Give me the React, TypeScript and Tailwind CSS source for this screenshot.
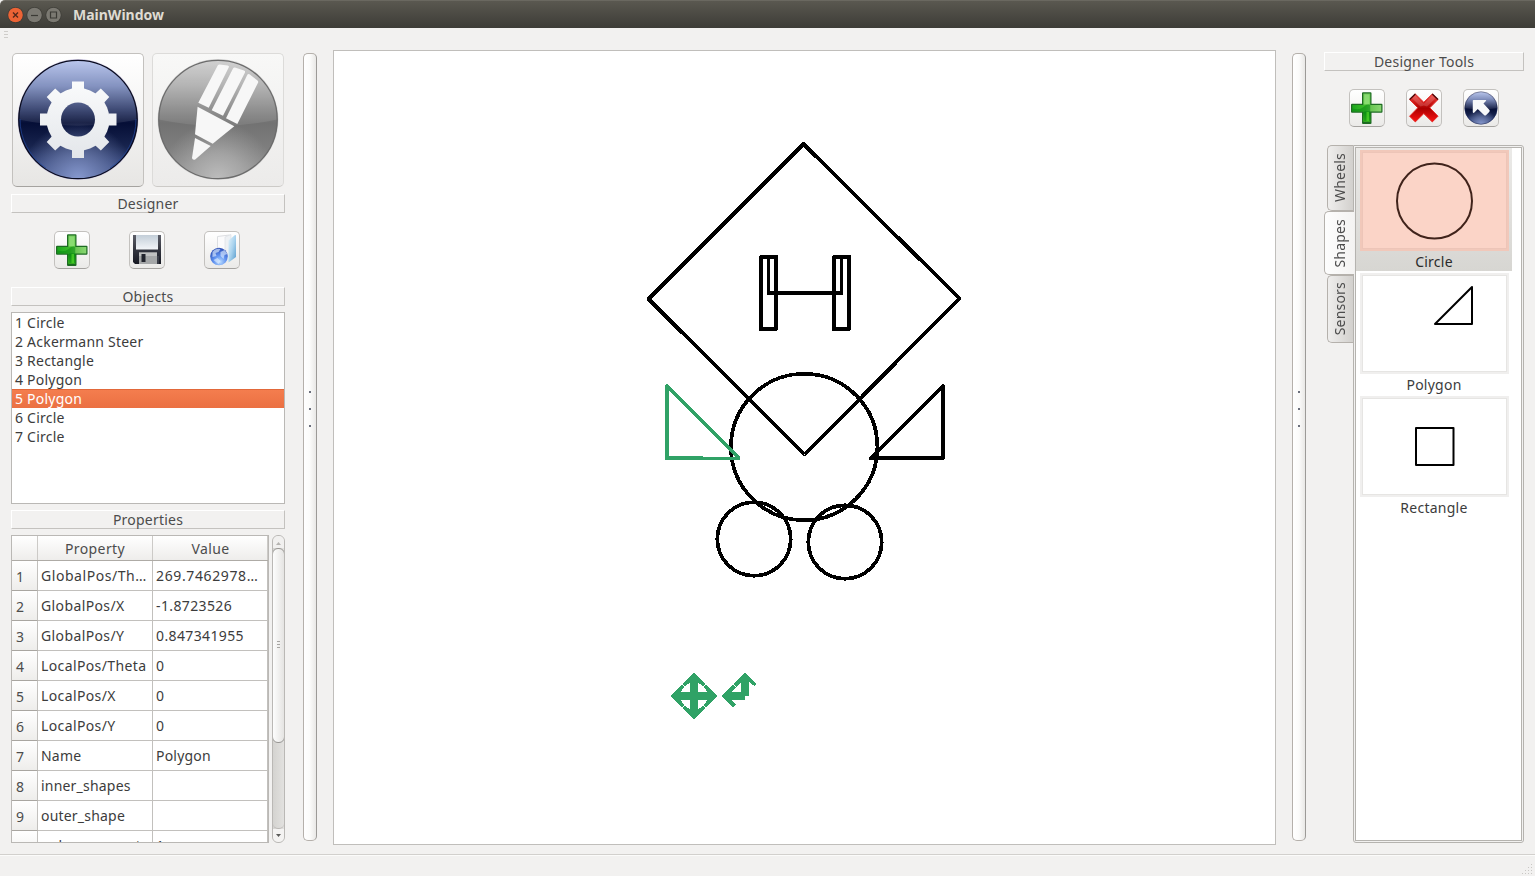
import React from "react";

const objects = ["1 Circle", "2 Ackermann Steer", "3 Rectangle", "4 Polygon", "5 Polygon", "6 Circle", "7 Circle"];

const properties: [string, string][] = [
  ["GlobalPos/Th…", "269.7462978…"],
  ["GlobalPos/X", "-1.8723526"],
  ["GlobalPos/Y", "0.847341955"],
  ["LocalPos/Theta", "0"],
  ["LocalPos/X", "0"],
  ["LocalPos/Y", "0"],
  ["Name", "Polygon"],
  ["inner_shapes", ""],
  ["outer_shape", ""],
  ["polygon_count", "1"],
];

function PanelLabel({ children, className = "" }: { children: React.ReactNode; className?: string }) {
  return (
    <div
      className={`flex h-[19px] shrink-0 items-center justify-center border border-t-white border-r-[#c4c2bf] border-b-[#c4c2bf] border-l-white tracking-[0.22px] text-[#4c4c4c] ${className}`}
    >
      {children}
    </div>
  );
}

function ToolButton({ children }: { children: React.ReactNode }) {
  return (
    <button className="flex h-[38px] w-9 items-center justify-center rounded-[5px] border border-[#c3c1be] border-b-[#a5a3a0] bg-linear-to-b from-white to-[#ebeae8]">
      {children}
    </button>
  );
}

function Splitter() {
  return (
    <div className="mt-[3px] flex h-[788px] w-[14px] shrink-0 flex-col items-center rounded-[5px] border border-[#b5b0ab] border-r-[#9c9a97] bg-linear-to-r from-white via-[#fbfbfa] to-[#e9e8e6] pt-[337px]">
      <i className="size-[2px] bg-[#6b6f7c]" />
      <i className="mt-[15px] size-[2px] bg-[#6b6f7c]" />
      <i className="mt-[15px] size-[2px] bg-[#6b6f7c]" />
    </div>
  );
}

function PlusIcon() {
  return (
    <svg width="34" height="34" viewBox="0 0 34 34" className="shrink-0">
      <defs>
        <linearGradient id="plusV" x1="0" y1="0" x2="0" y2="1">
          <stop offset="0" stopColor="#6fcb58" />
          <stop offset=".35" stopColor="#6fd453" />
          <stop offset=".6" stopColor="#0c8f14" />
          <stop offset="1" stopColor="#3fc61f" />
        </linearGradient>
        <linearGradient id="plusH" x1="0" y1="0" x2="1" y2="0">
          <stop offset="0" stopColor="#1ca81d" />
          <stop offset=".45" stopColor="#3dbb2a" />
          <stop offset=".65" stopColor="#69c653" />
          <stop offset="1" stopColor="#8ad673" />
        </linearGradient>
      </defs>
      <path
        d="M13 1.300h7.500q1 0 1 1v10.400h10q1 0 1 1v7q0 1-1 1h-10v10.200q0 1-1 1H13q-1 0-1-1V21.700H2q-1 0-1-1v-7q0-1 1-1h10V2.300q0-1 1-1z"
        fill="#1d6b22"
      />
      <path d="M13.300 2.500h7v28.200h-7z" fill="url(#plusV)" />
      <path d="M2.300 14h29v6.500h-29z" fill="url(#plusH)" />
      <path d="M14.300 3.500h5v9.500h-5z" fill="#a4e58e" opacity=".5" />
      <path d="M2.500 17.500q7 2 11-1.500t7-2h-.3v16h-6V20.300H2.500z" fill="#068511" opacity=".5" />
      <path d="M16.500 21h2.500v9h-2.500z" fill="#5ee02f" opacity=".6" />
    </svg>
  );
}

function SaveIcon() {
  return (
    <svg width="30" height="32" viewBox="0 0 30 32" className="shrink-0">
      <defs>
        <linearGradient id="diskBody" x1="0" y1="0" x2="0" y2="1">
          <stop offset="0" stopColor="#5d5f69" />
          <stop offset=".5" stopColor="#343640" />
          <stop offset="1" stopColor="#171923" />
        </linearGradient>
        <linearGradient id="diskLabel" x1="0" y1="0" x2="0" y2="1">
          <stop offset="0" stopColor="#c3ced8" />
          <stop offset="1" stopColor="#f3f5f9" />
        </linearGradient>
      </defs>
      <path d="M1 1h28v29H3l-2-2z" fill="url(#diskBody)" />
      <path d="M4 1h22v14.500H4z" fill="url(#diskLabel)" />
      <path d="M7 18.500h18V30H7z" fill="#a5a7a8" />
      <path d="M7 18.500h18V22H7z" fill="#c0c1c1" />
      <path d="M9.500 20h4v8h-4z" fill="#22242d" />
      <path d="M26 22v8" stroke="#555862" />
    </svg>
  );
}

function OpenIcon() {
  return (
    <svg width="32" height="34" viewBox="0 0 32 34" className="shrink-0">
      <defs>
        <linearGradient id="folderFlap" x1="0" y1="0" x2="1" y2="1">
          <stop offset="0" stopColor="#e4f3fb" />
          <stop offset=".5" stopColor="#a9d3ee" />
          <stop offset="1" stopColor="#579bcc" />
        </linearGradient>
        <radialGradient id="globe" cx=".55" cy=".8" r=".75">
          <stop offset="0" stopColor="#b9dcff" />
          <stop offset=".5" stopColor="#5d8fee" />
          <stop offset="1" stopColor="#2f52b8" />
        </radialGradient>
      </defs>
      <path d="M11.500 3.500l12-1.500v22l-12 3z" fill="#fbfbfc" stroke="#dcdee1" />
      <path d="M19 4l6-2.500v24L19 30z" fill="#eef1f4" stroke="#d8dce0" strokeWidth=".6" />
      <path d="M22.500 7.500L29 2q1-.5 1 1v21l-7.500 5.500z" fill="url(#folderFlap)" />
      <circle cx="13" cy="23.500" r="8.800" fill="url(#globe)" />
      <path
        d="M6.500 19q3-4 8-3l-2 3-3 1 1 3-4 1zM14.500 19l4-2 3 4-3 1-1 4-3-3zM7.500 27l4-2 3 3-2 3z"
        fill="#dcebff"
        opacity=".65"
      />
    </svg>
  );
}

function DeleteIcon() {
  return (
    <svg width="34" height="34" viewBox="0 0 34 34" className="shrink-0">
      <defs>
        <linearGradient id="crossFill" x1="0" y1="0" x2="0" y2="1">
          <stop offset="0" stopColor="#ec4d49" />
          <stop offset=".3" stopColor="#cf1a18" />
          <stop offset=".52" stopColor="#ab0000" />
          <stop offset="1" stopColor="#fb1212" />
        </linearGradient>
      </defs>
      <path
        d="M8.300 3l8.500 8.300L25.300 3l5.700 5.500-8.200 8.300 8.200 8.400-5.700 5.700-8.500-8.300-8.500 8.300-5.700-5.700 8.200-8.400-8.200-8.300z"
        fill="url(#crossFill)"
        stroke="#e32a26"
        strokeWidth="1"
        strokeLinejoin="round"
      />
      <path d="M2.600 8.500L8.300 3M31 8.500L25.300 3" stroke="#4c0809" strokeWidth="1.300" />
      <path d="M8.300 4.500l8.500 8.300 8.500-8.300 3 3-8.300 8-3.200-1-3.300 1-8.200-8z" fill="#fff" opacity=".16" />
    </svg>
  );
}

function BallDefs({ id, dark }: { id: string; dark: boolean }) {
  return (
    <defs>
      <linearGradient id={`${id}Ball`} x1="0" y1="0" x2="0" y2="1">
        <stop offset="0" stopColor={dark ? "#b4c2ec" : "#cdcdcd"} />
        <stop offset=".22" stopColor={dark ? "#7888ba" : "#acacac"} />
        <stop offset=".42" stopColor={dark ? "#2b3866" : "#858585"} />
        <stop offset=".53" stopColor={dark ? "#050e36" : "#727272"} />
        <stop offset=".72" stopColor={dark ? "#17234d" : "#7d7d7d"} />
        <stop offset="1" stopColor={dark ? "#405696" : "#939393"} />
      </linearGradient>
      <radialGradient id={`${id}Glow`} cx=".5" cy="1" r=".48">
        <stop offset="0" stopColor={dark ? "#8799cf" : "#bdbdbd"} />
        <stop offset=".45" stopColor={dark ? "#7484b4" : "#b0b0b0"} stopOpacity=".7" />
        <stop offset="1" stopColor={dark ? "#7484b4" : "#a5a5a5"} stopOpacity="0" />
      </radialGradient>
    </defs>
  );
}

function Ball({ id, dark }: { id: string; dark: boolean }) {
  return (
    <g>
      <BallDefs id={id} dark={dark} />
      <circle cx="66" cy="66.500" r="60.400" fill={dark ? "#bfb7d9" : "#c6c6c6"} opacity=".7" />
      <circle cx="66" cy="66.500" r="59.500" fill={`url(#${id}Ball)`} />
      <path d="M6.500 66.500Q66 79 125.500 66.500A59.500 59.500 0 0 0 6.500 66.500z" fill="#fff" opacity=".09" />
      <circle cx="66" cy="66.500" r="59.500" fill={`url(#${id}Glow)`} />
      <circle cx="66" cy="66.500" r="59.200" fill="none" stroke={dark ? "#0b0d20" : "#6c6c6c"} strokeWidth="1.300" />
      {dark && (
        <path
          d="M8 66a58 58 0 0 0 26 49M124 66a58 58 0 0 1-26 49"
          fill="none"
          stroke="#21479e"
          strokeWidth="1"
          opacity=".7"
        />
      )}
    </g>
  );
}

function SettingsIcon() {
  return (
    <svg width="132" height="134" viewBox="0 0 132 134" className="-m-px">
      <defs>
        <linearGradient id="gearFill" x1="0" y1="28" x2="0" y2="105" gradientUnits="userSpaceOnUse">
          <stop offset="0" stopColor="#fafbfc" />
          <stop offset="1" stopColor="#e3e6ea" />
        </linearGradient>
        <mask id="gearHole">
          <rect width="132" height="134" fill="#fff" />
          <circle cx="66" cy="66.500" r="17" fill="#000" />
        </mask>
      </defs>
      <Ball id="settings" dark />
      <g fill="url(#gearFill)" mask="url(#gearHole)">
        <circle cx="66" cy="66.500" r="31.500" />
        <path d="M60 28.500h12v8h-12zM60 97h12v8H60zM28 60.500h8v12h-8zM96.500 60.500h8v12h-8z" />
        <path d="M34.700 44l8.500-8.500 6 5.500-9 9zM97.300 44l-8.500-8.500-6 5.500 9 9zM34.700 89l8.500 8.500 6-5.500-9-9zM97.300 89l-8.500 8.500-6-5.500 9-9z" />
      </g>
    </svg>
  );
}

function DesignerIcon() {
  return (
    <svg width="132" height="134" viewBox="0 0 132 134" className="-m-px">
      <Ball id="designer" dark={false} />
      <g fill="#f7f7f7">
        <path d="M65.700 12.500q.5-1 2-1l8 1q2 .3 1 2L56.700 54.700l-10.400-4.900z" />
        <path d="M81 15.500q.6-1.300 2-1l9 3q1.600.7 1 2L71 62.700l-11.300-5.500z" />
        <path d="M95.500 21.500q.6-1 2-.3l8 6.300q1.100 1 .5 2.300L85.300 71 74 65.300z" />
        <path d="M45.600 53.700l36.700 19.600-21.600 17.400-17.700-9.400z" />
        <path d="M43 85l15.700 8-15.500 13.500q-2.700 1-3.200-1.500z" />
      </g>
    </svg>
  );
}

function CursorIcon() {
  return (
    <svg width="34" height="34" viewBox="4 4.500 124 124" className="shrink-0">
      <Ball id="cursor" dark />
      <path d="M36 40q0-3 3-3h43q5 0 2 4l-9 9 21 23q4 4 0 8L85 92q-4 4-8 0L54 70 42 83q-5 4-6-2z" fill="#f7f8fa" />
    </svg>
  );
}

function ScrollBar() {
  return (
    <div className="flex h-[308px] w-[13px] flex-col overflow-hidden rounded-[6px] border border-[#bab8b5] bg-linear-to-r from-[#d4d3d0] to-[#e2e1df]">
      <div className="flex h-3 shrink-0 items-center justify-center bg-[#f1f0ef] pt-[2px]">
        <svg width="5" height="3" viewBox="0 0 5 3"><path d="M2.500 0L5 3H0z" fill="#b5b3b0" /></svg>
      </div>
      <div className="-mx-px flex h-[195px] shrink-0 flex-col items-center justify-center gap-[2px] rounded-[6px] border border-[#989693] bg-linear-to-r from-[#fdfdfd] to-[#e5e4e2] pb-[2px]">
        <i className="h-px w-[3px] bg-[#a7a5a2]" />
        <i className="h-px w-[3px] bg-[#a7a5a2]" />
        <i className="h-px w-[3px] bg-[#a7a5a2]" />
      </div>
      <div className="h-[86px] shrink-0 rounded-b-[5px] border-b border-[#bab8b5]" />
      <div className="flex grow items-center justify-center bg-[#f4f3f2] pb-px">
        <svg width="5" height="3" viewBox="0 0 5 3"><path d="M0 0h5L2.500 3z" fill="#5b5b59" /></svg>
      </div>
    </div>
  );
}

function PropertyTable() {
  return (
    <div className="h-[308px] w-[258px] overflow-hidden border border-[#bab8b5] bg-white">
      <div className="flex h-[25px] border-b border-[#aeaba6] bg-linear-to-b from-white to-[#eeedeb] text-[#4c4c4c]">
        <div className="w-[26px] border-r border-[#cccac7]" />
        <div className="flex w-[115px] items-center justify-center border-r border-[#cccac7] tracking-[0.4px]">Property</div>
        <div className="flex w-[115px] items-center justify-center border-r border-[#cccac7] pl-px tracking-[0.4px]">Value</div>
      </div>
      {properties.map(([name, value], i) => (
        <div key={name} className="flex h-[30px] leading-[29px] whitespace-nowrap">
          <div className="w-[26px] border-r border-b border-r-[#c2c0bd] border-b-[#a9a6a1] bg-linear-to-b from-white to-[#eeedeb] pt-px pl-1 text-[#4c4c4c]">
            {i < 9 ? i + 1 : ""}
          </div>
          <div className={`w-[115px] border-r border-b border-[#c2c0bd] pl-[3px] ${i === 0 ? "tracking-[0.55px]" : i > 5 ? "tracking-[0.2px]" : "tracking-[0.38px]"}`}>
            {name}
          </div>
          <div className={`w-[115px] border-r border-b border-[#c2c0bd] pl-[3px] ${i === 0 ? "tracking-[0.62px]" : i === 6 ? "tracking-[0.2px]" : "tracking-[0.38px]"}`}>
            {value}
          </div>
        </div>
      ))}
    </div>
  );
}

const arm = "0,-23 11.500,-12 8.800,-9.500 3.800,-14 3.800,3.800 -3.800,3.800 -3.800,-14 -8.800,-9.500 -11.500,-12";

function Canvas() {
  return (
    <div className="h-[795px] w-[943px] shrink-0 border border-[#c0bebb] bg-white">
      <svg width="941" height="793" viewBox="334 51 941 793" shapeRendering="crispEdges" className="block">
        <g fill="none" stroke="#000" strokeWidth="3.700" strokeLinejoin="round">
          <path d="M803.500 144L959.500 298.500 804.500 454.500 648.500 299z" />
          <path d="M761 257h15v72h-15zM834 257h15v72h-15z" strokeWidth="4" />
          <path d="M768.500 256v37M841.500 293v-37" strokeWidth="3" />
          <path d="M767 293h76" strokeWidth="4" />
          <path d="M943 386v72h-72z" strokeWidth="4" />
          <circle cx="804.200" cy="447" r="73.200" />
          <circle cx="754" cy="539" r="36.700" />
          <circle cx="845" cy="542" r="36.700" />
          <path d="M703 458H667V386L739 458" stroke="#30a266" strokeWidth="4" />
          <path d="M702 458.500h37" stroke="#30a266" strokeWidth="3" strokeLinecap="round" />
        </g>
        <g fill="#30a266">
          <g transform="translate(694 696)">
            <polygon points={arm} />
            <polygon points={arm} transform="rotate(90)" />
            <polygon points={arm} transform="rotate(180)" />
            <polygon points={arm} transform="rotate(270)" />
          </g>
          <g transform="translate(745 696)">
            <path d="M0-23L11.700-12.300 9.200-10 4-14V0H0V4H-14L-9.200 8.500-12 11.500-23 0-12-11.500-9.200-8.500-14-4H-4V-14L-8.500-9.200-11.500-12z" />
          </g>
        </g>
      </svg>
    </div>
  );
}

function ShapeTile({ label, selected = false, children }: { label: string; selected?: boolean; children: React.ReactNode }) {
  return (
    <div
      className={`flex h-[123px] w-[156px] flex-col items-center pt-[2px] ${selected ? "bg-linear-to-b from-[#ebeae8] to-[#d7d6d2]" : ""}`}
    >
      <div className={`h-[101px] w-[149px] border-2 p-px ${selected ? "border-[#f1c8ba] bg-[#fbd4c7]" : "border-[#f0efee] bg-white"}`}>
        <svg
          width="143"
          height="95"
          viewBox="0 0 143 95"
          fill="none"
          strokeWidth="2"
          strokeLinejoin="round"
          className={`block outline ${selected ? "stroke-[#40231b] outline-[#edc5b8]" : "stroke-black outline-[#e6e5e3]"}`}
        >
          {children}
        </svg>
      </div>
      <div className={`mt-px leading-[19px] tracking-[0.25px] ${selected ? "text-[#2b2b2b]" : ""}`}>{label}</div>
    </div>
  );
}

function Tab({ children, className }: { children: string; className: string }) {
  return (
    <div className={`flex items-center justify-center rounded-l-[5px] border border-r-0 border-[#b5b1ac] tracking-[0.2px] ${className}`}>
      <span className="rotate-180 [writing-mode:vertical-rl]">{children}</span>
    </div>
  );
}

export default function App() {
  return (
    <div className="flex h-[876px] w-[1535px] flex-col overflow-hidden bg-[#f2f1f0] font-['Noto_Sans','Open_Sans',sans-serif] text-[14px] text-[#3c3c3c]">
      <header className="flex h-7 shrink-0 items-center rounded-tl-[5px] border-t border-[#6a6860] bg-linear-to-b from-[#5a5850] to-[#3d3c37] pl-[7px]">
        <svg width="56" height="18" viewBox="0 0 56 18" fill="none">
          <circle cx="8.500" cy="9" r="8" fill="#33322e" opacity=".6" />
          <circle cx="8.500" cy="9" r="7.300" fill="#ec6335" />
          <path d="M6 6.500l5 5M11 6.500l-5 5" stroke="#53281b" strokeWidth="1.400" />
          <circle cx="27.500" cy="9" r="8" fill="#34332e" opacity=".6" />
          <circle cx="27.500" cy="9" r="7.300" fill="#7b7972" />
          <path d="M24 9.500h7" stroke="#3b3a35" strokeWidth="1.200" />
          <circle cx="46.500" cy="9" r="8" fill="#34332e" opacity=".6" />
          <circle cx="46.500" cy="9" r="7.300" fill="#7b7972" />
          <path d="M43.500 6h6v6h-6z" stroke="#3b3a35" strokeWidth="1.200" />
        </svg>
        <h1 className="ml-[10px] text-[14px] font-bold text-[#dfdbd2]">MainWindow</h1>
      </header>
      <div className="flex h-[22px] shrink-0 flex-col gap-[2px] pt-[3px] pl-1">
        <i className="h-px w-1 bg-[#cfcdca]" />
        <i className="h-px w-1 bg-[#cfcdca]" />
        <i className="h-px w-1 bg-[#cfcdca]" />
      </div>
      <main className="flex h-[804px] shrink-0 pl-[11px]">
        <aside className="flex w-[274px] shrink-0 flex-col pt-[3px]">
          <div className="flex gap-2 pl-px">
            <button className="h-[134px] w-[132px] rounded-[5px] border border-[#c3c1be] border-b-[#a5a3a0] bg-linear-to-b from-white to-[#e7e6e4]">
              <SettingsIcon />
            </button>
            <button className="h-[134px] w-[132px] rounded-[5px] border border-[#dcdbd9] border-b-[#cccac7] bg-linear-to-b from-[#f8f8f7] to-[#ecebea]">
              <DesignerIcon />
            </button>
          </div>
          <PanelLabel className="mt-[7px]">Designer</PanelLabel>
          <div className="mt-[18px] flex gap-[39px] pl-[43px]">
            <ToolButton><PlusIcon /></ToolButton>
            <ToolButton><SaveIcon /></ToolButton>
            <ToolButton><OpenIcon /></ToolButton>
          </div>
          <PanelLabel className="mt-[18px]">Objects</PanelLabel>
          <ul className="mt-[6px] h-[192px] border border-[#bab8b5] bg-white tracking-[0.22px]">
            {objects.map((o, i) => (
              <li
                key={o}
                className={`h-[19px] pl-[3px] ${i === 4 ? "border-t border-[#e2683a] bg-linear-to-b from-[#f47d4e] to-[#eb7042] leading-[17px] text-white" : "leading-[19px]"}`}
              >
                {o}
              </li>
            ))}
          </ul>
          <PanelLabel className="mt-[6px]">Properties</PanelLabel>
          <div className="mt-[6px] flex justify-between">
            <PropertyTable />
            <ScrollBar />
          </div>
        </aside>
        <div className="ml-[18px] flex">
          <Splitter />
        </div>
        <div className="ml-4 flex">
          <Canvas />
        </div>
        <div className="ml-4 flex">
          <Splitter />
        </div>
        <aside className="ml-[18px] flex w-[200px] shrink-0 flex-col pt-[2px]">
          <PanelLabel>Designer Tools</PanelLabel>
          <div className="mt-[18px] flex gap-[21px] pl-[25px]">
            <ToolButton><PlusIcon /></ToolButton>
            <ToolButton><DeleteIcon /></ToolButton>
            <ToolButton><CursorIcon /></ToolButton>
          </div>
          <div className="mt-[18px] flex">
            <div className="z-10 -mr-px flex w-[30px] flex-col items-end">
              <Tab className="mr-px h-[66px] w-[26px] bg-linear-to-r from-[#efeeed] to-[#d2d0cd] pr-[2px] pb-px text-[#4c4c4c]">Wheels</Tab>
              <Tab className="h-16 w-[30px] bg-linear-to-r from-[#fdfdfd] to-[#f4f3f2] text-[#4c4c4c]">Shapes</Tab>
              <Tab className="mr-px h-[68px] w-[26px] bg-linear-to-r from-[#efeeed] to-[#d2d0cd] pr-[2px] pb-px text-[#4c4c4c]">Sensors</Tab>
            </div>
            <div className="h-[698px] w-[171px] rounded-[3px] rounded-tl-none border border-[#b5b3af] bg-[#f2f1f0] p-px">
              <div className="h-full border border-[#b5b3af] bg-white">
                <ShapeTile label="Circle" selected>
                  <circle cx="71.500" cy="48" r="37.500" />
                </ShapeTile>
                <ShapeTile label="Polygon">
                  <path d="M109 11v37H72z" />
                </ShapeTile>
                <ShapeTile label="Rectangle">
                  <path d="M53 29h37.500v37H53z" />
                </ShapeTile>
              </div>
            </div>
          </div>
        </aside>
      </main>
      <footer className="flex grow items-end justify-end border-t border-[#d2d0cd] shadow-[inset_0_1px_0_#fbfbfa]">
        <svg width="14" height="14" viewBox="0 0 14 14" fill="#c9c7c4">
          <path d="M10 2h1v1h-1zM7 5h1v1H7zM10 5h1v1h-1zM4 8h1v1H4zM7 8h1v1H7zM10 8h1v1h-1zM1 11h1v1H1zM4 11h1v1H4zM7 11h1v1H7zM10 11h1v1h-1z" />
        </svg>
      </footer>
    </div>
  );
}
